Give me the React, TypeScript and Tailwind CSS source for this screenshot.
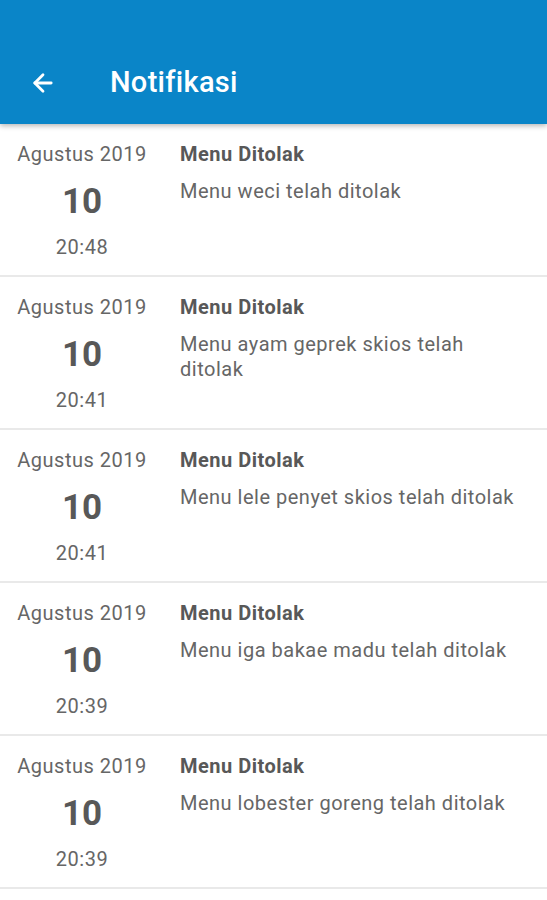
import { ArrowLeft } from 'lucide-react'

const items = [
  { month: 'Agustus 2019', day: '10', time: '20:48', title: 'Menu Ditolak', body: 'Menu weci telah ditolak' },
  { month: 'Agustus 2019', day: '10', time: '20:41', title: 'Menu Ditolak', body: 'Menu ayam geprek skios telah ditolak' },
  { month: 'Agustus 2019', day: '10', time: '20:41', title: 'Menu Ditolak', body: 'Menu lele penyet skios telah ditolak' },
  { month: 'Agustus 2019', day: '10', time: '20:39', title: 'Menu Ditolak', body: 'Menu iga bakae madu telah ditolak' },
  { month: 'Agustus 2019', day: '10', time: '20:39', title: 'Menu Ditolak', body: 'Menu lobester goreng telah ditolak' },
]

export default function App() {
  return (
    <div className="min-h-[900px] w-[547px] bg-white" style={{ fontFamily: 'Roboto, "Noto Sans", sans-serif' }}>
      {/* App bar */}
      <header className="relative z-10 h-[124px] bg-[#0a85c8] shadow-[0_2px_5px_rgba(0,0,0,0.28)] flex items-end">
        <div className="h-[82px] w-full flex items-center">
          <button className="w-[86px] flex justify-center text-white" aria-label="Kembali">
            <ArrowLeft className="w-[28px] h-[28px]" strokeWidth={2.4} />
          </button>
          <h1 className="ml-[24px] text-[29px] font-medium text-white tracking-[0.3px]">Notifikasi</h1>
        </div>
      </header>

      {/* List */}
      <ul>
        {items.map((n, i) => (
          <li key={i} className="flex border-b-2 border-[#e9e9e9] h-[153px]">
            <div className="w-[164px] flex flex-col items-center pt-[17px] text-[#666]">
              <span className="text-[20px] leading-[26px] tracking-[0.5px]">{n.month}</span>
              <span className="mt-[15px] text-[35px] leading-[40px] font-bold text-[#585858]">{n.day}</span>
              <span className="mt-[12px] text-[20px] leading-[26px] tracking-[0.5px]">{n.time}</span>
            </div>
            <div className="flex-1 pt-[17px] pl-[16px] pr-[16px]">
              <p className="text-[20px] leading-[26px] font-bold text-[#585858] tracking-[0.5px]">{n.title}</p>
              <p className="mt-[12px] text-[20px] leading-[25px] text-[#666] tracking-[0.5px]">{n.body}</p>
            </div>
          </li>
        ))}
      </ul>
    </div>
  )
}
